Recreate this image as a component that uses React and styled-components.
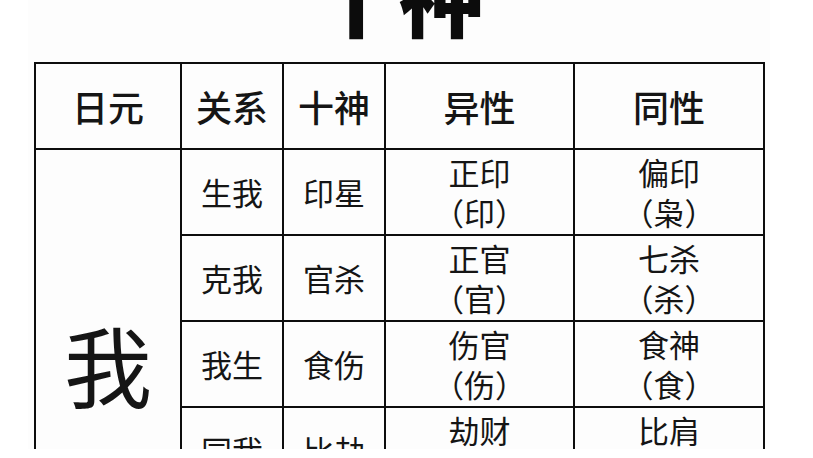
import React from "react";
import styled, { createGlobalStyle } from "styled-components";

const Global = createGlobalStyle`
  html, body { margin: 0; padding: 0; background: #ffffff; }
  body { font-family: "Noto Sans CJK SC", "Noto Sans", sans-serif; }
`;

const Page = styled.div`
  width: 813px;
  height: 458px;
  overflow: hidden;
  background: #ffffff;
`;

const Sheet = styled.div`
  margin-left: 28px;
  width: 742px;
  height: 449px;
  overflow: hidden;
  background: #fdfdfd;
`;

const Title = styled.h1`
  margin: -49px 0 0 0;
  height: 86px;
  font-size: 86px;
  line-height: 1;
  font-weight: 900;
  color: #0c0c0c;
  text-align: center;
  letter-spacing: 0;
`;

const Table = styled.table`
  margin: 25px 0 0 6px;
  border-collapse: collapse;
  table-layout: fixed;
  width: 729px;
  color: #151515;
`;

const Col = styled.col`
  width: ${(p) => p.$w}px;
`;

const Th = styled.th`
  height: 84px;
  padding: 0;
  border: 2px solid #0d0d0d;
  font-size: 36px;
  font-weight: 500;
  text-align: center;
  vertical-align: middle;
  line-height: 1;
`;

const Td = styled.td`
  height: 84px;
  padding: 0;
  border: 2px solid #0d0d0d;
  font-size: ${(p) => (p.$big ? 88 : 31)}px;
  font-weight: 400;
  text-align: center;
  vertical-align: middle;
  line-height: 40px;
  padding-bottom: ${(p) => (p.$big ? 2 : 0)}px;
`;

const Line = styled.div`
  display: block;
  line-height: 40px;
  white-space: nowrap;
`;

const rows = [
  ["生我", "印星", ["正印", "（印）"], ["偏印", "（枭）"]],
  ["克我", "官杀", ["正官", "（官）"], ["七杀", "（杀）"]],
  ["我生", "食伤", ["伤官", "（伤）"], ["食神", "（食）"]],
  ["同我", "比劫", ["劫财", "（劫）"], ["比肩", "（比）"]],
  ["我克", "财星", ["正财", "（财）"], ["偏财", "（才）"]],
];

const Pair = ({ lines }) => (
  <>
    {lines.map((l) => (
      <Line key={l}>{l}</Line>
    ))}
  </>
);

export default function App() {
  return (
    <Page>
      <Global />
      <Sheet>
        <Title>十神</Title>
        <Table>
          <colgroup>
            <Col $w={146} />
            <Col $w={102} />
            <Col $w={102} />
            <Col $w={189} />
            <Col $w={190} />
          </colgroup>
          <thead>
            <tr>
              <Th>日元</Th>
              <Th>关系</Th>
              <Th>十神</Th>
              <Th>异性</Th>
              <Th>同性</Th>
            </tr>
          </thead>
          <tbody>
            {rows.map((r, i) => (
              <tr key={r[0]}>
                {i === 0 && (
                  <Td $big rowSpan={rows.length}>
                    我
                  </Td>
                )}
                <Td>{r[0]}</Td>
                <Td>{r[1]}</Td>
                <Td>
                  <Pair lines={r[2]} />
                </Td>
                <Td>
                  <Pair lines={r[3]} />
                </Td>
              </tr>
            ))}
          </tbody>
        </Table>
      </Sheet>
    </Page>
  );
}
